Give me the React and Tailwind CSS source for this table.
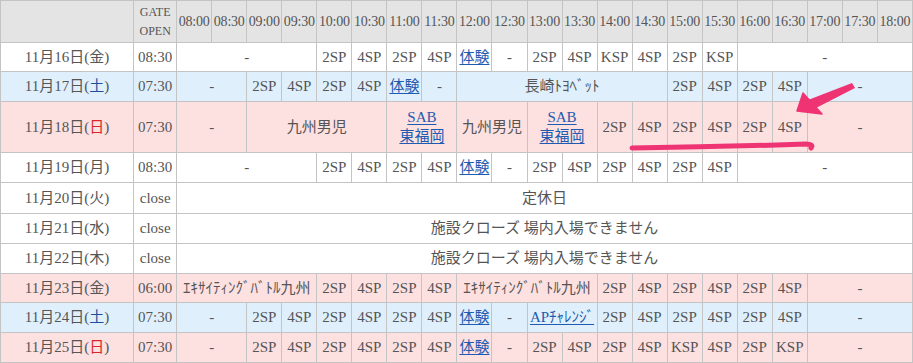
import React from "react";

const times = [
  "08:00", "08:30", "09:00", "09:30", "10:00", "10:30", "11:00",
  "11:30", "12:00", "12:30", "13:00", "13:30", "14:00", "14:30",
  "15:00", "15:30", "16:00", "16:30", "17:00", "17:30", "18:00",
];

// each cell: [text, colspan, isLink]
const rows = [
  {
    date: "11月16日", dow: "金", gate: "08:30", bg: "bg-white", h: "h-[29px]",
    cells: [["-", 4], ["2SP"], ["4SP"], ["2SP"], ["4SP"], ["体験", 1, true], ["-"], ["2SP"], ["4SP"], ["KSP"], ["4SP"], ["2SP"], ["KSP"], ["-", 5]],
  },
  {
    date: "11月17日", dow: "土", gate: "07:30", bg: "bg-[#dff0fc]", h: "h-[30px]",
    cells: [["-", 2], ["2SP"], ["4SP"], ["2SP"], ["4SP"], ["体験", 1, true], ["-"], ["長崎ﾄﾖﾍﾞｯﾄ", 6], ["2SP"], ["4SP"], ["2SP"], ["4SP"], ["-", 3]],
  },
  {
    date: "11月18日", dow: "日", gate: "07:30", bg: "bg-[#fde0e0]", h: "h-[51px]",
    cells: [["-", 2], ["九州男児", 4], ["SAB|東福岡", 2, true], ["九州男児", 2], ["SAB|東福岡", 2, true], ["2SP"], ["4SP"], ["2SP"], ["4SP"], ["2SP"], ["4SP"], ["-", 3]],
  },
  {
    date: "11月19日", dow: "月", gate: "08:30", bg: "bg-white", h: "h-[30px]",
    cells: [["-", 4], ["2SP"], ["4SP"], ["2SP"], ["4SP"], ["体験", 1, true], ["-"], ["2SP"], ["4SP"], ["2SP"], ["4SP"], ["2SP"], ["4SP"], ["-", 5]],
  },
  {
    date: "11月20日", dow: "火", gate: "close", bg: "bg-white", h: "h-[31px]",
    cells: [["定休日", 21]],
  },
  {
    date: "11月21日", dow: "水", gate: "close", bg: "bg-white", h: "h-[30px]",
    cells: [["施設クローズ 場内入場できません", 21]],
  },
  {
    date: "11月22日", dow: "木", gate: "close", bg: "bg-white", h: "h-[30px]",
    cells: [["施設クローズ 場内入場できません", 21]],
  },
  {
    date: "11月23日", dow: "金", gate: "06:00", bg: "bg-[#fde0e0]", h: "h-[29px]",
    cells: [["ｴｷｻｲﾃｨﾝｸﾞﾊﾞﾄﾙ九州", 4], ["2SP"], ["4SP"], ["2SP"], ["4SP"], ["ｴｷｻｲﾃｨﾝｸﾞﾊﾞﾄﾙ九州", 4], ["2SP"], ["4SP"], ["2SP"], ["4SP"], ["2SP"], ["4SP"], ["-", 3]],
  },
  {
    date: "11月24日", dow: "土", gate: "07:30", bg: "bg-[#dff0fc]", h: "h-[30px]",
    cells: [["-", 2], ["2SP"], ["4SP"], ["2SP"], ["4SP"], ["2SP"], ["4SP"], ["体験", 1, true], ["-"], ["APﾁｬﾚﾝｼﾞ", 2, true], ["2SP"], ["4SP"], ["2SP"], ["4SP"], ["2SP"], ["4SP"], ["-", 3]],
  },
  {
    date: "11月25日", dow: "日", gate: "07:30", bg: "bg-[#fde0e0]", h: "h-[30px]",
    cells: [["-", 2], ["2SP"], ["4SP"], ["2SP"], ["4SP"], ["2SP"], ["4SP"], ["体験", 1, true], ["-"], ["2SP"], ["4SP"], ["2SP"], ["4SP"], ["KSP"], ["4SP"], ["2SP"], ["KSP"], ["-", 3]],
  },
];

const dowColor = (d) => {
  if (d === "土") return "text-[#1d4f9c]";
  if (d === "日") return "text-[#d8262c]";
  return "";
};

const cellCls = "border border-[#c4c4c4] text-center p-0 leading-[19px]";

const CellText = ({ text, link }) => {
  const parts = text.split("|");
  const inner = parts.map((p, i) => (
    <React.Fragment key={i}>
      {i > 0 && <br />}
      {p}
    </React.Fragment>
  ));
  if (!link) return inner;
  return <a className="text-[#1f5bb0] underline underline-offset-2">{inner}</a>;
};

// hand-drawn annotation over the 11/18 row
const Arrow = () => (
  <svg
    className="absolute left-0 top-0 pointer-events-none"
    width="913"
    height="363"
    viewBox="0 0 913 363"
  >
    <polygon points="852,83 855,88 814,109 808,100" fill="#ef3474" />
    <polygon points="797,111 803,93 822,114" fill="#ef3474" strokeLinejoin="round" stroke="#ef3474" strokeWidth="1.5" />
    <path
      d="M632 148 Q720 147 806 144 Q814 144 811 148"
      stroke="#ef3474"
      strokeWidth="5"
      strokeLinecap="round"
      fill="none"
    />
  </svg>
);

const App = () => {
  return (
    <div className="relative w-[913px] h-[363px] overflow-hidden bg-white font-['Liberation_Serif','Noto_Sans_CJK_JP',serif] text-[#555] text-[15px]">
      <table className="table-fixed border-collapse w-[913px]">
        <colgroup>
          <col className="w-[133px]" />
          <col className="w-[43px]" />
          {times.map((t) => (
            <col key={t} className="w-[35px]" />
          ))}
        </colgroup>
        <thead>
          <tr className="h-[42px] bg-[#e4e4e4]">
            <th className={cellCls}></th>
            <th className={`${cellCls} font-normal text-[12px] leading-[19px]`}>
              GATE
              <br />
              OPEN
            </th>
            {times.map((t) => (
              <th key={t} className={`${cellCls} font-normal text-[14px] tracking-[-0.2px]`}>
                {t}
              </th>
            ))}
          </tr>
        </thead>
        <tbody>
          {rows.map((row) => (
            <tr key={row.date} className={`${row.h} ${row.bg}`}>
              <td className={cellCls}>
                {row.date}(<span className={dowColor(row.dow)}>{row.dow}</span>)
              </td>
              <td className={cellCls}>{row.gate}</td>
              {row.cells.map(([text, span = 1, link], i) => (
                <td key={i} colSpan={span} className={`${cellCls} whitespace-nowrap`}>
                  <CellText text={text} link={link} />
                </td>
              ))}
            </tr>
          ))}
        </tbody>
      </table>
      <Arrow />
    </div>
  );
};

export default App;
